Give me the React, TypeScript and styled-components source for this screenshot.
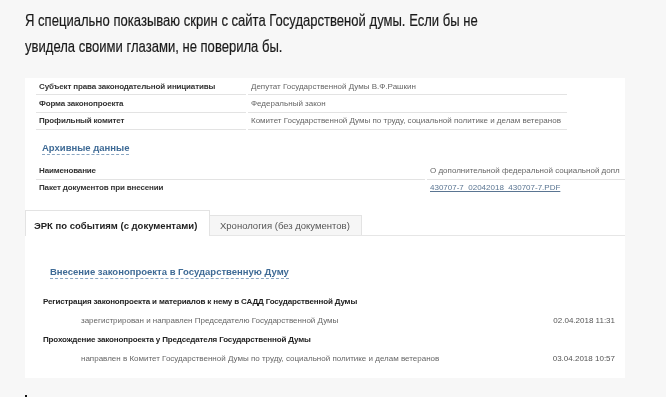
import React from 'react';
import styled, { createGlobalStyle } from 'styled-components';

const GlobalStyle = createGlobalStyle`
  body {
    margin: 0;
    background: #f7f7f7;
  }
`;

const Page = styled.div`
  box-sizing: border-box;
  padding: 8px 0 0 25px;
  width: 666px;
  height: 397px;
  overflow: hidden;
`;

// the article font is a condensed sans; squeeze Liberation Sans to its width
const Lead = styled.p`
  margin: 0;
  width: 620px;
  font-family: "Liberation Sans", Arial, sans-serif;
  font-size: 17px;
  line-height: 26px;
  color: #1a1a1a;
  transform: scaleX(0.768);
  transform-origin: left top;
  -webkit-text-stroke: 0.2px #1a1a1a;
`;

const Shot = styled.div`
  margin-top: 18px;
  width: 600px;
  height: 300px;
  background: #fff;
  overflow: hidden;
  font-family: "Liberation Sans", Arial, sans-serif;
  font-size: 8px;
  color: #333;
  filter: blur(0.25px);
`;

const InfoTable = styled.div<{ $cols: string; $width: number; $top?: number }>`
  margin: ${p => p.$top ?? 0}px 0 0 11px;
  width: ${p => p.$width}px;
  display: grid;
  grid-template-columns: ${p => p.$cols};
  column-gap: 2px;
`;

const Cell = styled.div<{ $value?: boolean; $line?: boolean }>`
  height: 16.4px;
  display: flex;
  align-items: center;
  padding-left: 3px;
  white-space: nowrap;
  overflow: hidden;
  border-bottom: 1px solid ${p => (p.$line ? '#e3e3e3' : 'transparent')};
  font-weight: ${p => (p.$value ? 400 : 700)};
  letter-spacing: ${p => (p.$value ? 0 : -0.15)}px;
  color: ${p => (p.$value ? '#666' : '#333')};
`;

const FileLink = styled.span`
  color: #5a7592;
  text-decoration: underline;
`;

const DashedLink = styled.div<{ $size: number; $left: number; $top: number }>`
  display: inline-block;
  margin-left: ${p => p.$left}px;
  margin-top: ${p => p.$top}px;
  font-size: ${p => p.$size}px;
  line-height: 12px;
  font-weight: 700;
  color: #3f6b96;
  border-bottom: 1px dashed #8aa6c2;
`;

const Block = styled.div`
  display: flex;
  flex-direction: column;
  align-items: flex-start;
`;

const TabBar = styled.div`
  margin-top: 13px;
  height: 25px;
  display: flex;
  align-items: flex-end;
  border-bottom: 1px solid #e6e6e6;
`;

const Tab = styled.div<{ $active?: boolean }>`
  box-sizing: border-box;
  width: ${p => (p.$active ? 185 : 152)}px;
  height: ${p => (p.$active ? 26 : 20)}px;
  margin-bottom: ${p => (p.$active ? -1 : 0)}px;
  padding: ${p => (p.$active ? '9px 0 0 8px' : '4px 0 0 10px')};
  background: ${p => (p.$active ? '#fff' : '#f6f6f6')};
  border-top: 1px solid #e3e3e3;
  border-right: 1px solid #e3e3e3;
  border-left: ${p => (p.$active ? '1px solid #e3e3e3' : 'none')};
  font-size: 9.5px;
  line-height: 12px;
  font-weight: ${p => (p.$active ? 700 : 400)};
  color: ${p => (p.$active ? '#222' : '#555')};
  white-space: nowrap;
`;

const EventList = styled.div`
  margin: 13px 10px 0 18px;
`;

const EventTitle = styled.div`
  height: 19px;
  line-height: 19px;
  font-weight: 700;
  letter-spacing: -0.14px;
  color: #222;
`;

const EventItem = styled.div`
  height: 19px;
  line-height: 19px;
  padding-left: 38px;
  display: flex;
  justify-content: space-between;
  color: #666;
`;

const EventDate = styled.span`
  color: #555;
`;

const Caret = styled.div`
  margin-top: 17px;
  width: 2px;
  height: 3px;
  background: #111;
`;

const mainRows = [
  ['Субъект права законодательной инициативы', 'Депутат Государственной Думы В.Ф.Рашкин'],
  ['Форма законопроекта', 'Федеральный закон'],
  ['Профильный комитет', 'Комитет Государственной Думы по труду, социальной политике и делам ветеранов'],
];

const events = [
  {
    title: 'Регистрация законопроекта и материалов к нему в САДД Государственной Думы',
    item: 'зарегистрирован и направлен Председателю Государственной Думы',
    date: '02.04.2018 11:31',
  },
  {
    title: 'Прохождение законопроекта у Председателя Государственной Думы',
    item: 'направлен в Комитет Государственной Думы по труду, социальной политике и делам ветеранов',
    date: '03.04.2018 10:57',
  },
];

export default function App() {
  return (
    <>
      <GlobalStyle />
      <Page>
        <Lead>
          Я специально показываю скрин с сайта Государственой думы. Если бы не увидела своими глазами, не поверила бы.
        </Lead>
        <Shot>
          <InfoTable $cols="210px 1fr" $width={531}>
            {mainRows.map(([label, value]) => (
              <React.Fragment key={label}>
                <Cell $line>{label}</Cell>
                <Cell $line $value>{value}</Cell>
              </React.Fragment>
            ))}
          </InfoTable>
          <Block>
            <DashedLink $size={9.5} $left={17} $top={12}>Архивные данные</DashedLink>
          </Block>
          <InfoTable $cols="389px 1fr" $width={589} $top={7}>
            <Cell $line>Наименование</Cell>
            <Cell $line $value>О дополнительной федеральной социальной допл</Cell>
            <Cell>Пакет документов при внесении</Cell>
            <Cell $value><FileLink>430707-7_02042018_430707-7.PDF</FileLink></Cell>
          </InfoTable>
          <TabBar>
            <Tab $active>ЭРК по событиям (с документами)</Tab>
            <Tab>Хронология (без документов)</Tab>
          </TabBar>
          <Block>
            <DashedLink $size={9.5} $left={25} $top={30}>Внесение законопроекта в Государственную Думу</DashedLink>
          </Block>
          <EventList>
            {events.map(e => (
              <React.Fragment key={e.date}>
                <EventTitle>{e.title}</EventTitle>
                <EventItem>
                  <span>{e.item}</span>
                  <EventDate>{e.date}</EventDate>
                </EventItem>
              </React.Fragment>
            ))}
          </EventList>
        </Shot>
        <Caret />
      </Page>
    </>
  );
}
